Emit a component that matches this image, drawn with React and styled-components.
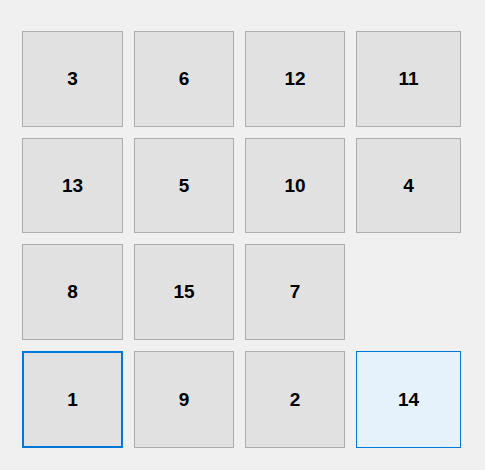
import React from "react";
import styled, { createGlobalStyle } from "styled-components";

const Global = createGlobalStyle`
  html, body { margin: 0; padding: 0; background: #f0f0f0; }
  body { width: 485px; height: 470px; overflow: hidden; font-family: "Liberation Sans", Arial, sans-serif; }
`;

const Board = styled.div`
  display: grid;
  grid-template-columns: 101px 100px 100px 105px;
  grid-template-rows: 96px 95px 96px 97px;
  column-gap: 11px;
  row-gap: 11px;
  padding: 31px 0 0 22px;
`;

const borders = {
  focus: "2px solid #0078d7",
  hover: "1px solid #0078d7",
  normal: "1px solid #adadad",
};

const Tile = styled.div`
  box-sizing: border-box;
  display: flex;
  align-items: center;
  justify-content: center;
  background: ${(p) => (p.$state === "hover" ? "#e5f1fb" : "#e1e1e1")};
  border: ${(p) => borders[p.$state] || borders.normal};
  font-family: "Liberation Sans", Arial, sans-serif;
  font-weight: bold;
  font-size: 19px;
  color: #000;
  user-select: none;
`;

const Empty = styled.div``;

const tiles = [3, 6, 12, 11, 13, 5, 10, 4, 8, 15, 7, null, 1, 9, 2, 14];

export default function App() {
  return (
    <>
      <Global />
      <Board>
        {tiles.map((n, i) =>
          n === null ? (
            <Empty key={i} />
          ) : (
            <Tile
              key={i}
              role="button"
              $state={n === 1 ? "focus" : n === 14 ? "hover" : "normal"}
            >
              {n}
            </Tile>
          )
        )}
      </Board>
    </>
  );
}
